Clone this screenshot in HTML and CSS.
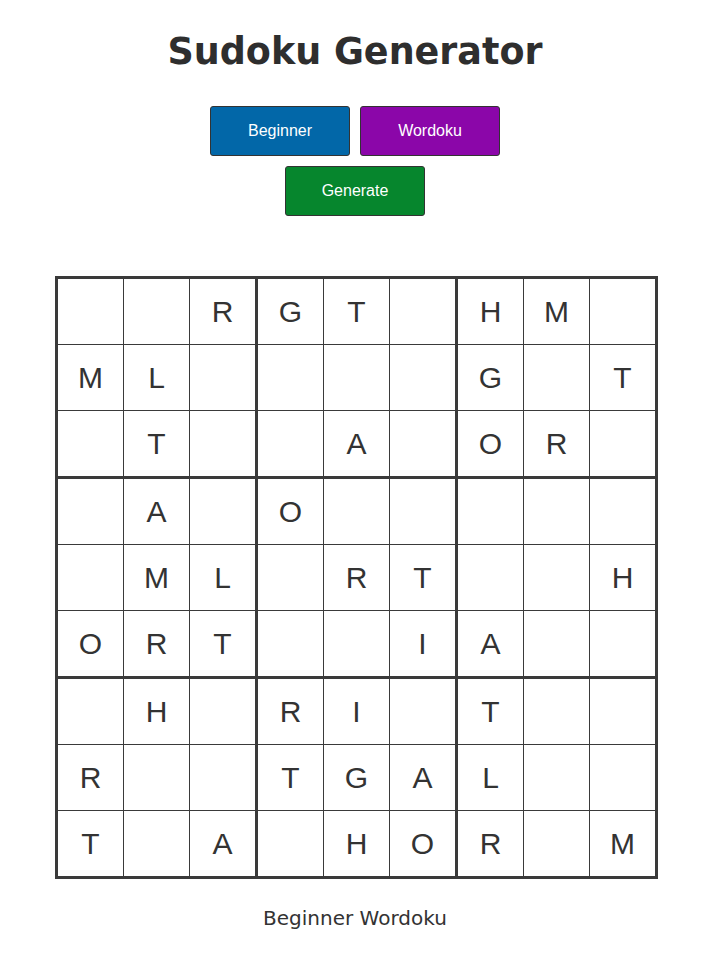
FILE: index.html
```html
<!DOCTYPE html>
<html>
<head>
<meta charset="utf-8">
<title>Sudoku Generator</title>
<link rel="stylesheet" href="styles.css">
</head>
<body>
<div class="page">
  <h1 class="title">Sudoku Generator</h1>
  <div class="controls">
    <div class="row">
      <button class="btn btn-blue">Beginner</button>
      <button class="btn btn-purple">Wordoku</button>
    </div>
    <div class="row">
      <button class="btn btn-green">Generate</button>
    </div>
  </div>
  <div class="board">
    <div class="box"><div class="cell"></div><div class="cell"></div><div class="cell">R</div><div class="cell">M</div><div class="cell">L</div><div class="cell"></div><div class="cell"></div><div class="cell">T</div><div class="cell"></div></div>
    <div class="box"><div class="cell">G</div><div class="cell">T</div><div class="cell"></div><div class="cell"></div><div class="cell"></div><div class="cell"></div><div class="cell"></div><div class="cell">A</div><div class="cell"></div></div>
    <div class="box"><div class="cell">H</div><div class="cell">M</div><div class="cell"></div><div class="cell">G</div><div class="cell"></div><div class="cell">T</div><div class="cell">O</div><div class="cell">R</div><div class="cell"></div></div>
    <div class="box"><div class="cell"></div><div class="cell">A</div><div class="cell"></div><div class="cell"></div><div class="cell">M</div><div class="cell">L</div><div class="cell">O</div><div class="cell">R</div><div class="cell">T</div></div>
    <div class="box"><div class="cell">O</div><div class="cell"></div><div class="cell"></div><div class="cell"></div><div class="cell">R</div><div class="cell">T</div><div class="cell"></div><div class="cell"></div><div class="cell">I</div></div>
    <div class="box"><div class="cell"></div><div class="cell"></div><div class="cell"></div><div class="cell"></div><div class="cell"></div><div class="cell">H</div><div class="cell">A</div><div class="cell"></div><div class="cell"></div></div>
    <div class="box"><div class="cell"></div><div class="cell">H</div><div class="cell"></div><div class="cell">R</div><div class="cell"></div><div class="cell"></div><div class="cell">T</div><div class="cell"></div><div class="cell">A</div></div>
    <div class="box"><div class="cell">R</div><div class="cell">I</div><div class="cell"></div><div class="cell">T</div><div class="cell">G</div><div class="cell">A</div><div class="cell"></div><div class="cell">H</div><div class="cell">O</div></div>
    <div class="box"><div class="cell">T</div><div class="cell"></div><div class="cell"></div><div class="cell">L</div><div class="cell"></div><div class="cell"></div><div class="cell">R</div><div class="cell"></div><div class="cell">M</div></div>
  </div>
  <p class="caption">Beginner Wordoku</p>
</div>
</body>
</html>
```
FILE: styles.css
```css
html, body {
  margin: 0;
  padding: 0;
  background: #ffffff;
}

.page {
  width: 713px;
  display: flex;
  flex-direction: column;
  align-items: center;
  font-family: "DejaVu Sans", Verdana, sans-serif;
  color: #333333;
}

.title {
  margin: 0 3px 0 0;
  padding-top: 29px;
  font-size: 36.5px;
  line-height: 46px;
  font-weight: bold;
  color: #2e2e2e;
}

.controls {
  margin: 31px 3px 0 0;
  display: flex;
  flex-direction: column;
  align-items: center;
  gap: 10px;
}

.row {
  display: flex;
  gap: 10px;
}

.btn {
  width: 140px;
  height: 50px;
  border: 1px solid #333333;
  border-radius: 3px;
  color: #ffffff;
  font-family: "Liberation Sans", Arial, sans-serif;
  font-size: 16px;
  padding: 0;
}

.btn-blue { background: #0267a8; }
.btn-purple { background: #8b06a9; }
.btn-green { background: #06862d; }

.board {
  margin-top: 60px;
  display: grid;
  grid-template-columns: repeat(3, 197px);
  gap: 3px;
  padding: 3px;
  background: #3a3a3a;
}

.box {
  display: grid;
  grid-template-columns: repeat(3, 65px);
  grid-auto-rows: 65px;
  gap: 1px;
  background: #3a3a3a;
}

.cell {
  background: #ffffff;
  display: flex;
  align-items: center;
  justify-content: center;
  font-family: "Liberation Sans", Arial, sans-serif;
  font-size: 30px;
  color: #333333;
}

.caption {
  margin: 27px 3px 0 0;
  font-size: 20px;
  line-height: 24px;
  color: #333333;
}
```
